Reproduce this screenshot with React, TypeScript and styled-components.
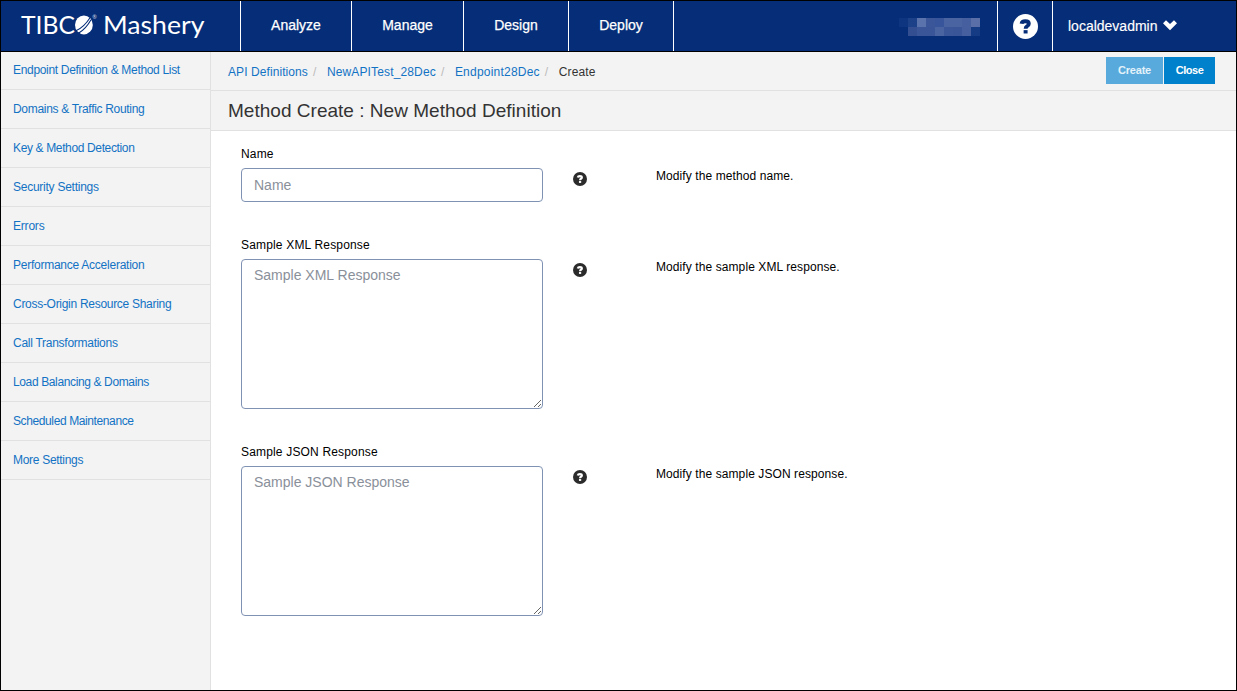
import React from "react";
import styled, { createGlobalStyle } from "styled-components";

const GlobalStyle = createGlobalStyle`
  * { box-sizing: border-box; }
  body { margin: 0; background: #fff; font-family: "Liberation Sans", Arial, sans-serif; font-size: 12px; color: #000; }
`;

const Page = styled.div`
  height: 691px;
  display: flex;
  flex-direction: column;
  border: 1px solid #000;
`;

const Header = styled.header`
  height: 51px;
  flex: none;
  display: flex;
  background: #052d78;
  border-bottom: 1px solid #000;
  color: #fff;
`;

const Brand = styled.div`
  width: 239px;
  svg { display: block; }
`;

const Tab = styled.a<{ $width: number }>`
  width: ${(p) => p.$width}px;
  border-left: 1px solid #fff;
  font-size: 14px;
  line-height: 48px;
  text-align: center;
  -webkit-text-stroke: 0.25px #fff;
`;

const HeaderFill = styled.div`
  flex: 1;
  border-left: 1px solid #fff;
  display: flex;
  justify-content: flex-end;
  padding: 17px 17px 0 0;
`;

const HelpCell = styled.div`
  width: 55px;
  border-left: 1px solid #fff;
  display: flex;
  justify-content: center;
  padding-top: 13px;
`;

const UserMenu = styled.div`
  width: 184px;
  border-left: 1px solid #fff;
  display: flex;
  padding-left: 15px;
  font-size: 14px;
  line-height: 50px;
  -webkit-text-stroke: 0.15px #fff;
  svg { margin: 19px 0 0 5px; }
`;

const Body = styled.div`
  flex: 1;
  display: flex;
`;

const Sidebar = styled.nav`
  width: 210px;
  flex: none;
  background: #f3f3f3;
  border-right: 1px solid #e1e1e1;
`;

const SideLink = styled.a<{ $spacing: number }>`
  display: block;
  height: 39px;
  padding-left: 12px;
  border-bottom: 1px solid #e1e1e1;
  color: #1272c4;
  line-height: 38px;
  white-space: nowrap;
  letter-spacing: ${(p) => p.$spacing}px;
  &:first-child { height: 38px; line-height: 37px; }
`;

const Main = styled.main`
  flex: 1;
`;

const Toolbar = styled.div`
  height: 39px;
  display: flex;
  justify-content: space-between;
  padding: 0 21px 0 17px;
  background: #f3f3f3;
  border-bottom: 1px solid #e1e1e1;
`;

const Crumbs = styled.div`
  display: flex;
  line-height: 40px;
`;

const Crumb = styled.a<{ $current?: boolean; $spacing: number }>`
  color: ${(p) => (p.$current ? "#333" : "#1272c4")};
  letter-spacing: ${(p) => p.$spacing}px;
`;

const Slash = styled.span`
  width: 19px;
  padding-left: 5px;
  color: #bbb;
`;

const Actions = styled.div`
  display: flex;
  gap: 1px;
  padding-top: 5px;
`;

const Action = styled.button<{ $width: number; $muted?: boolean }>`
  width: ${(p) => p.$width}px;
  height: 27px;
  padding: 0 0 1px;
  border: 0;
  background: ${(p) => (p.$muted ? "#58aadc" : "#0081cb")};
  color: ${(p) => (p.$muted ? "#e4f2fa" : "#fff")};
  font: bold 11px "Liberation Sans", Arial, sans-serif;
  letter-spacing: ${(p) => (p.$muted ? -0.2 : -0.45)}px;
`;

const Title = styled.h1`
  height: 40px;
  margin: 0;
  padding-left: 17px;
  background: #f3f3f3;
  border-bottom: 1px solid #e1e1e1;
  color: #333;
  font-size: 19px;
  font-weight: normal;
  line-height: 39px;
  letter-spacing: 0.02px;
`;

const Form = styled.form`
  display: flex;
  flex-direction: column;
  gap: 35px;
  padding: 15px 0 0 30px;
`;

const Row = styled.div`
  display: flex;
`;

const Field = styled.label`
  width: 302px;
  display: flex;
  flex-direction: column;
  letter-spacing: 0.17px;
  line-height: 16px;
`;

const control = `
  width: 302px;
  margin: 6px 0 0;
  border: 1px solid #8092b4;
  border-radius: 4px;
  background: #fff;
  font: 14px "Liberation Sans", Arial, sans-serif;
  letter-spacing: 0;
  outline: 0;
  &::placeholder { color: #8a909a; opacity: 1; }
`;

const Input = styled.input`
  ${control}
  height: 34px;
  padding: 0 12px;
`;

const TextArea = styled.textarea`
  ${control}
  height: 150px;
  padding: 7px 12px;
`;

const Tip = styled.div`
  width: 113px;
  padding: 26px 0 0 30px;
`;

const Hint = styled.p`
  margin: 22px 0 0;
  line-height: 16px;
  letter-spacing: 0.09px;
`;

const QuestionDot = ({ size, fill, ink }: { size: number; fill: string; ink: string }) => (
  <svg width={size} height={size} viewBox="0 0 24 24">
    <circle cx="12" cy="12" r="12" fill={fill} />
    <path d="M8.2 9.4Q8.6 7 11.8 7Q15.2 7 15.2 9.4Q15.2 10.8 13.6 11.7Q12.1 12.5 12.1 14.2" fill="none" stroke={ink} strokeWidth="3.7" />
    <rect x="10.2" y="15.5" width="3.8" height="3.2" fill={ink} />
  </svg>
);

const Logo = () => (
  <svg width="239" height="50" viewBox="1 1 239 50" fill="#fff" fontFamily="Lato, sans-serif">
    <text x="21" y="33.8" fontSize="24.5" textLength="54" lengthAdjust="spacingAndGlyphs">TIBC</text>
    <ellipse cx="83.9" cy="24.9" rx="8.9" ry="9.5" />
    <path d="M76 30.7Q84 27.2 90 17.7M78.5 33.2Q86 28.7 91 19.7" fill="none" stroke="#052d78" strokeWidth="1.1" />
    <text x="92.3" y="18.7" fontSize="5.5" opacity="0.8">®</text>
    <text x="103" y="33.8" fontSize="25" textLength="101.5" lengthAdjust="spacingAndGlyphs">Mashery</text>
  </svg>
);

const mosaic = [
  ["#0d3580", "#1c4189", "#5a73ad", "#3c5799", "#38549a", "#4a64a2", "#4a64a2", "#455f9f", "#5a6fa8"],
  ["#052d78", "#334f92", "#3a5698", "#3a5698", "#4a64a2", "#3c5799", "#3a5698", "#455f9f", "#153b84"],
];

const Mosaic = () => (
  <svg width="81" height="18" viewBox="0 0 81 18" shapeRendering="crispEdges">
    {mosaic.map((row, y) => row.map((c, x) => <rect key={`${x}-${y}`} x={x * 9} y={y * 9} width="9" height="9" fill={c} />))}
  </svg>
);

const sections: [string, number][] = [
  ["Endpoint Definition & Method List", -0.32],
  ["Domains & Traffic Routing", -0.31],
  ["Key & Method Detection", -0.36],
  ["Security Settings", -0.25],
  ["Errors", -0.2],
  ["Performance Acceleration", -0.25],
  ["Cross-Origin Resource Sharing", -0.29],
  ["Call Transformations", -0.27],
  ["Load Balancing & Domains", -0.37],
  ["Scheduled Maintenance", -0.39],
  ["More Settings", -0.3],
];

const fields = [
  { label: "Name", hint: "Modify the method name." },
  { label: "Sample XML Response", hint: "Modify the sample XML response.", multiline: true },
  { label: "Sample JSON Response", hint: "Modify the sample JSON response.", multiline: true },
];

export default function App() {
  return (
    <Page>
      <GlobalStyle />
      <Header>
        <Brand><Logo /></Brand>
        <Tab $width={111}>Analyze</Tab>
        <Tab $width={112}>Manage</Tab>
        <Tab $width={105}>Design</Tab>
        <Tab $width={105}>Deploy</Tab>
        <HeaderFill><Mosaic /></HeaderFill>
        <HelpCell><QuestionDot size={25} fill="#fff" ink="#052d78" /></HelpCell>
        <UserMenu>
          localdevadmin
          <svg width="14" height="11" viewBox="0 0 14 11"><path d="M0 3.2L3 .3L7 4L11 .3L14 3.2L7 10.2Z" fill="#fff" /></svg>
        </UserMenu>
      </Header>
      <Body>
        <Sidebar>
          {sections.map(([name, spacing]) => <SideLink key={name} $spacing={spacing}>{name}</SideLink>)}
        </Sidebar>
        <Main>
          <Toolbar>
            <Crumbs>
              <Crumb $spacing={0.08}>API Definitions</Crumb><Slash>/</Slash>
              <Crumb $spacing={0.14}>NewAPITest_28Dec</Crumb><Slash>/</Slash>
              <Crumb $spacing={0.22}>Endpoint28Dec</Crumb><Slash>/</Slash>
              <Crumb $current $spacing={0.14}>Create</Crumb>
            </Crumbs>
            <Actions>
              <Action $width={57} $muted>Create</Action>
              <Action $width={51}>Close</Action>
            </Actions>
          </Toolbar>
          <Title>Method Create : New Method Definition</Title>
          <Form>
            {fields.map((f) => (
              <Row key={f.label}>
                <Field>
                  {f.label}
                  {f.multiline ? <TextArea placeholder={f.label} /> : <Input placeholder={f.label} />}
                </Field>
                <Tip><QuestionDot size={14} fill="#2b2b2b" ink="#fff" /></Tip>
                <Hint>{f.hint}</Hint>
              </Row>
            ))}
          </Form>
        </Main>
      </Body>
    </Page>
  );
}
